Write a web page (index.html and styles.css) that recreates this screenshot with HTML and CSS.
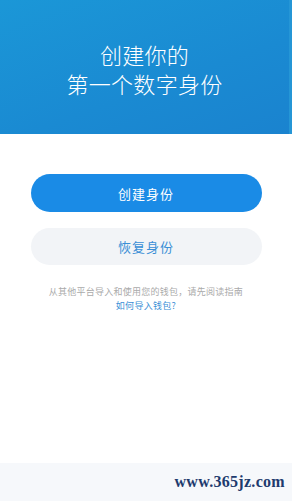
FILE: index.html
```html
<!DOCTYPE html>
<html lang="zh">
<head>
<meta charset="utf-8">
<link rel="stylesheet" href="styles.css">
</head>
<body>
<div class="page">
  <header class="hero">
    <h1 class="hero-title"><span>创建你的</span><span>第一个数字身份</span></h1>
  </header>
  <main class="actions">
    <button class="btn btn-primary">创建身份</button>
    <button class="btn btn-secondary">恢复身份</button>
    <p class="hint">从其他平台导入和使用您的钱包，请先阅读指南</p>
    <a class="link">如何导入钱包?</a>
  </main>
  <footer class="footer">
    <span class="mark">www.365jz.com</span>
  </footer>
</div>
</body>
</html>
```

FILE: styles.css
```css
* { box-sizing: border-box; }
html, body { margin: 0; padding: 0; }
body {
  width: 292px;
  height: 501px;
  background: #ffffff;
  font-family: "Noto Sans CJK SC", "Noto Sans", sans-serif;
  overflow: hidden;
}
.page {
  height: 501px;
  display: flex;
  flex-direction: column;
}
.hero {
  height: 134px;
  background: linear-gradient(160deg, #1b97d7 0%, #1a8ad2 60%, #1a83cf 100%);
  display: flex;
  align-items: center;
  justify-content: center;
  border-right: 3px solid #2596d6;
}
.hero-title {
  margin: 0;
  margin-top: 4px;
  display: flex;
  flex-direction: column;
  align-items: center;
  color: #ffffff;
  font-weight: 300;
  font-size: 22px;
  line-height: 29px;
  letter-spacing: 0.3px;
}
.actions {
  display: flex;
  flex-direction: column;
  align-items: center;
  padding-top: 40px;
}
.btn {
  width: 231px;
  height: 38px;
  border: none;
  border-radius: 19px;
  font-family: inherit;
  font-size: 13px;
  letter-spacing: 1px;
  padding: 0;
}
.btn-primary {
  background: #1a8be6;
  color: #ffffff;
}
.btn-secondary {
  margin-top: 16px;
  height: 37px;
  background: #f2f4f7;
  color: #3a8fd6;
}
.hint {
  margin: 20px 0 0;
  font-size: 9px;
  line-height: 14px;
  color: #aaaaaa;
  letter-spacing: 0.25px;
}
.link {
  font-size: 9px;
  line-height: 14px;
  color: #3b8fd6;
  letter-spacing: 0.3px;
}
.footer {
  margin-top: auto;
  height: 38px;
  background: #f6f8fb;
  display: flex;
  align-items: center;
  justify-content: flex-end;
  padding-right: 7px;
}
.mark {
  font-family: "Liberation Serif", serif;
  font-weight: bold;
  font-size: 16px;
  color: #1e3b6e;
  letter-spacing: 0.3px;
}
```
